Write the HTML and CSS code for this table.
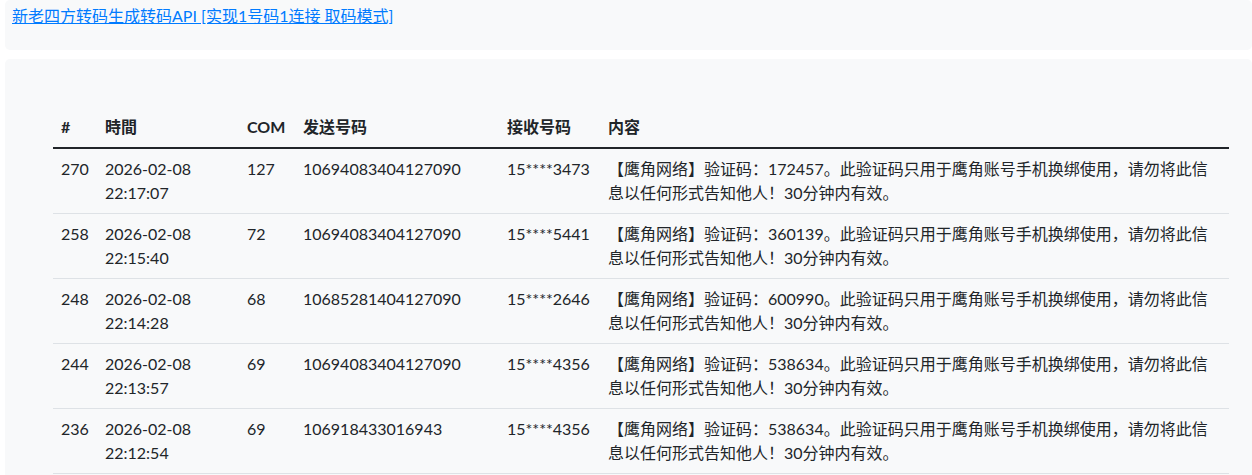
FILE: index.html
```html
<!DOCTYPE html>
<html lang="zh-CN">
<head>
<meta charset="utf-8">
<title>短信记录</title>
<link rel="stylesheet" href="styles.css">
</head>
<body>
<div class="card card-top">
  <a class="api-link" href="#">新老四方转码生成转码API [实现1号码1连接 取码模式]</a>
</div>
<div class="card card-main">
  <table class="sms-table">
    <colgroup>
      <col class="c-id"><col class="c-time"><col class="c-com"><col class="c-from"><col class="c-to"><col class="c-body">
    </colgroup>
    <thead>
      <tr><th>#</th><th>時間</th><th>COM</th><th>发送号码</th><th>接收号码</th><th>内容</th></tr>
    </thead>
    <tbody>
      <tr><td>270</td><td>2026-02-08 22:17:07</td><td>127</td><td>10694083404127090</td><td>15****3473</td><td>【鹰角网络】验证码：172457。此验证码只用于鹰角账号手机换绑使用，请勿将此信息以任何形式告知他人！30分钟内有效。</td></tr>
      <tr><td>258</td><td>2026-02-08 22:15:40</td><td>72</td><td>10694083404127090</td><td>15****5441</td><td>【鹰角网络】验证码：360139。此验证码只用于鹰角账号手机换绑使用，请勿将此信息以任何形式告知他人！30分钟内有效。</td></tr>
      <tr><td>248</td><td>2026-02-08 22:14:28</td><td>68</td><td>10685281404127090</td><td>15****2646</td><td>【鹰角网络】验证码：600990。此验证码只用于鹰角账号手机换绑使用，请勿将此信息以任何形式告知他人！30分钟内有效。</td></tr>
      <tr><td>244</td><td>2026-02-08 22:13:57</td><td>69</td><td>10694083404127090</td><td>15****4356</td><td>【鹰角网络】验证码：538634。此验证码只用于鹰角账号手机换绑使用，请勿将此信息以任何形式告知他人！30分钟内有效。</td></tr>
      <tr><td>236</td><td>2026-02-08 22:12:54</td><td>69</td><td>106918433016943</td><td>15****4356</td><td>【鹰角网络】验证码：538634。此验证码只用于鹰角账号手机换绑使用，请勿将此信息以任何形式告知他人！30分钟内有效。</td></tr>
    </tbody>
  </table>
</div>
</body>
</html>
```
FILE: styles.css
```css
html, body {
  margin: 0;
  padding: 0;
  background: #fff;
}
body {
  font-family: Lato, "Noto Sans CJK SC", sans-serif;
  font-size: 16px;
  line-height: 24px;
  color: #212529;
}
.card {
  background: #f8f9fa;
  border-radius: 5px;
  margin-left: 5px;
}
.card-top {
  padding: 4px 7px 22px;
  margin-bottom: 9px;
}
.api-link {
  color: #007bff;
  text-decoration: underline;
}
.card-main {
  padding: 48px 23px 48px 48px;
}
.sms-table {
  width: 100%;
  border-collapse: collapse;
  table-layout: fixed;
}
.c-id { width: 44px; }
.c-time { width: 142px; }
.c-com { width: 56px; }
.c-from { width: 204px; }
.c-to { width: 101px; }
.sms-table th {
  text-align: left;
  font-weight: 700;
  padding: 8px;
  border-bottom: 2px solid #212529;
  vertical-align: bottom;
}
.sms-table td {
  padding: 8px;
  border-top: 1px solid #dee2e6;
  vertical-align: top;
}
.sms-table tbody tr:first-child td {
  border-top: none;
}
.sms-table tbody tr:last-child td {
  border-bottom: 1px solid #dee2e6;
}
```
